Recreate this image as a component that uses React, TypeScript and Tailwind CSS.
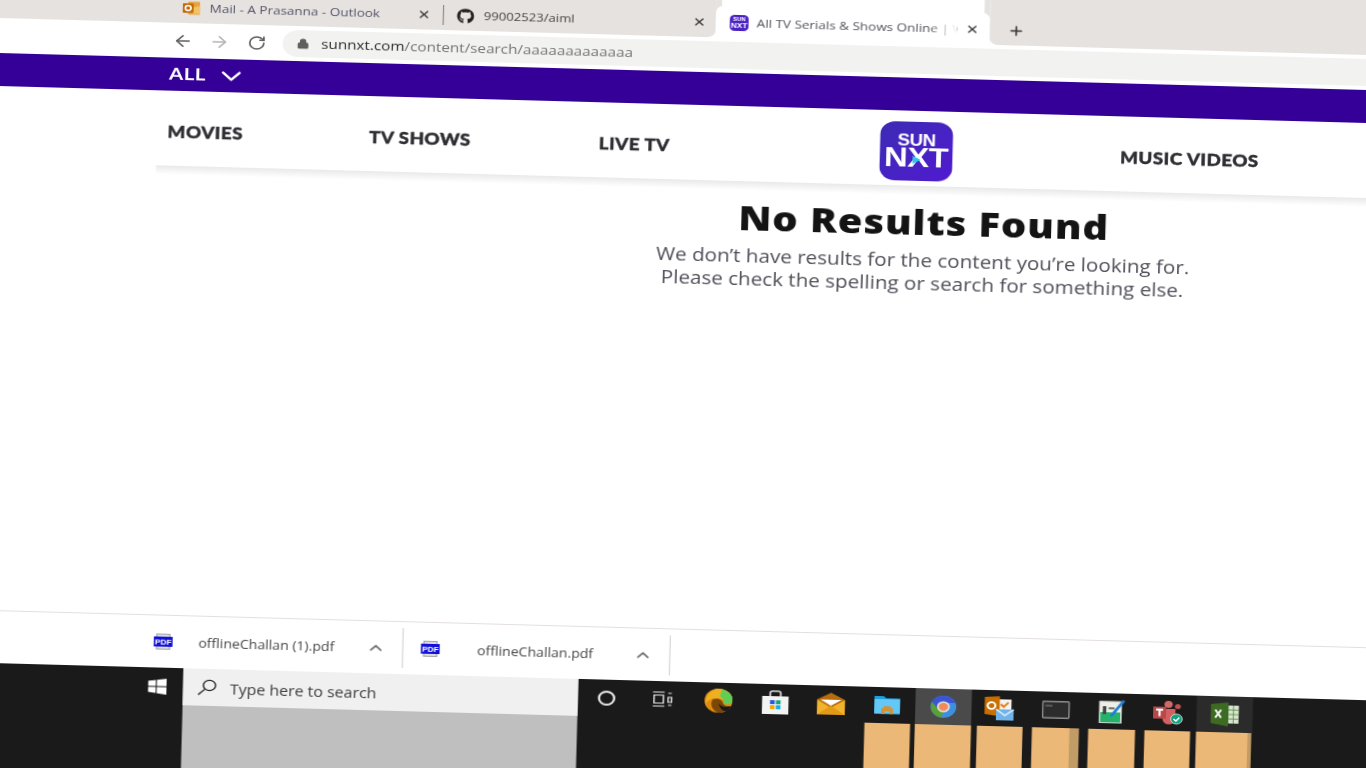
import { ArrowLeft, ArrowRight, ChevronDown, ChevronUp, Lock, Plus, RotateCw, X } from "lucide-react";
import { FaGithub } from "react-icons/fa";

const sans = "font-['Open_Sans',sans-serif]";

/* ── Small app icons ── */

const OutlookMini = () => (
  <svg width="15" height="16" viewBox="0 0 16 16">
    <rect x="5" y="1" width="11" height="14" rx="1" fill="#e8a33a" />
    <path d="M8 8l8-3v9H8z" fill="#f2c267" />
    <rect x="0" y="3" width="10" height="10" rx="1" fill="#c46a08" />
    <circle cx="5" cy="8" r="2.6" fill="none" stroke="#fff" strokeWidth="1.5" />
  </svg>
);

const SunMini = () => (
  <div className="flex h-[16px] w-[16px] flex-col items-center justify-center rounded-[4px] bg-[#4a22c4] font-['Liberation_Sans',sans-serif] font-bold leading-none text-white">
    <span className="text-[5px]">SUN</span>
    <span className="text-[7px]">NXT</span>
  </div>
);

const PdfIcon = () => (
  <div className="relative flex h-[16px] w-[16px] shrink-0 items-center">
    <div className="absolute inset-x-[2px] inset-y-0 border border-[#a4a4aa] bg-[#dcdce0]" />
    <div className="relative flex h-[10px] w-full items-center justify-center bg-[#1010d8] font-['Liberation_Sans',sans-serif] text-[7px] font-bold leading-none text-white">
      PDF
    </div>
  </div>
);

const WindowsLogo = () => (
  <svg width="16" height="16" viewBox="0 0 16 16" fill="#fff">
    <path d="M0 2.4 6.7 1.4v6.2H0zM7.6 1.3 16 0v7.6H7.6zM0 8.4h6.7v6.2L0 13.6zM7.6 8.4H16V16l-8.4-1.3z" />
  </svg>
);

const SearchGlass = () => (
  <svg width="17" height="17" viewBox="0 0 17 17" fill="none" stroke="#222" strokeWidth="1.2">
    <circle cx="10.5" cy="6.5" r="5.2" />
    <path d="M6.7 10.3 1 16" />
  </svg>
);

const TaskView = () => (
  <svg width="18" height="16" viewBox="0 0 18 16" fill="none" stroke="#e6e6e6" strokeWidth="1.2">
    <path d="M1 1h10M1 15h10M2 4h8v8H2z" />
    <path d="M14 2h3M14 6h3v5h-3zM14 14h3" />
  </svg>
);

const EdgeIcon = () => (
  <svg width="24" height="24" viewBox="0 0 24 24">
    <circle cx="12" cy="12" r="12" fill="#e08a10" />
    <path d="M12 0c6.600 0 12 5 12 11 0 1.500-.5 2.500-1.500 3.200C19 12 13 8.500 7 10 4 11 2.500 13 1 16 0 8 5 0 12 0z" fill="#eeb020" />
    <path d="M15 .6c5 1.400 9 5.400 9 10.400 0 2.600-1.500 4-4 4.500-1.500.3-3 0-4-.7 1-2.800-.4-5.500-3-7z" fill="#62cc55" />
    <path d="M7 11c4-2 8-.5 9 3.500.5 2 3 3 6 2.500-2 4.500-6 7-10 7-5-2-7.500-8-5-13z" fill="#7c4608" />
    <path d="M12 14.500c2 3.500 6 4.500 11 2.500-1 2-2.500 4-4 5-4 1-6-4-7-7.500z" fill="#1a1a1a" />
  </svg>
);

const StoreIcon = () => (
  <svg width="23" height="24" viewBox="0 0 23 24">
    <path d="M7 7V3a2 2 0 0 1 2-2h5a2 2 0 0 1 2 2v4" fill="none" stroke="#ddd" strokeWidth="1.500" />
    <rect x="0" y="6" width="23" height="18" fill="#f3f3f3" />
    <rect x="7" y="10" width="4" height="4" fill="#2a55e0" />
    <rect x="12" y="10" width="4" height="4" fill="#10a878" />
    <rect x="7" y="15" width="4" height="4" fill="#f5a800" />
    <rect x="12" y="15" width="4" height="4" fill="#10b0f0" />
  </svg>
);

const MailIcon = () => (
  <svg width="24" height="22" viewBox="0 0 24 22">
    <path d="M0 7 12 0l12 7v15H0z" fill="#b96c0a" />
    <path d="M3 7h18l-9 6z" fill="#fff" />
    <path d="M0 7l12 8 12-8v15H0z" fill="#f2b32c" />
    <path d="M0 22l12-9 12 9z" fill="#e39a17" />
  </svg>
);

const FolderIcon = () => (
  <svg width="22" height="18" viewBox="0 0 22 18">
    <path d="M0 0h8l2 2h12v16H0z" fill="#1f9fe0" />
    <rect x="0" y="3" width="22" height="14" fill="#63c8f5" />
    <path d="M6 18v-6h2v-2h6v2h2v6h-3v-3H9v3z" fill="#d39138" />
  </svg>
);

const ChromeIcon = () => (
  <svg width="22" height="22" viewBox="0 0 22 22">
    <circle cx="11" cy="11" r="11" fill="#3d8fe0" />
    <path d="M11 0A11 11 0 0 0 1 6.500L6 13 8 7h13A11 11 0 0 0 11 0z" fill="#3a55d8" />
    <path d="M1 6.500A11 11 0 0 0 9 21.800l3-7-5-1z" fill="#5aa038" />
    <circle cx="11" cy="11" r="5.500" fill="#dfe3dc" />
    <circle cx="11" cy="11" r="4" fill="#f08a5a" />
  </svg>
);

const OutlookIcon = () => (
  <svg width="26" height="24" viewBox="0 0 26 24">
    <rect x="11" y="3" width="12" height="11" fill="#f3f3f3" />
    <path d="M14 8l2.500 2.500 4-4.500" fill="none" stroke="#d97b0c" strokeWidth="1.800" />
    <path d="M0 1 13 0v20L0 18z" fill="#c86f00" />
    <circle cx="6" cy="9.500" r="3.300" fill="none" stroke="#fff" strokeWidth="1.800" />
    <rect x="10" y="13" width="15" height="11" fill="#6fb3ea" />
    <path d="M10 13l7.500 6 7.500-6" fill="none" stroke="#dfeefa" strokeWidth="1.500" />
  </svg>
);

const CmdIcon = () => (
  <svg width="24" height="18" viewBox="0 0 24 18">
    <rect x="0.700" y="0.700" width="22.600" height="16.600" rx="1" fill="#2c2c2c" stroke="#8c8c8c" strokeWidth="1.400" />
    <path d="M3 4h6v2H3z" fill="#5a5a5a" />
  </svg>
);

const PublisherIcon = () => (
  <svg width="24" height="24" viewBox="0 0 24 24">
    <rect x="1" y="2" width="19" height="22" fill="#eef0e8" stroke="#aaa" strokeWidth="0.800" />
    <rect x="2" y="13" width="17" height="10" fill="#25b36c" />
    <rect x="4" y="7" width="3" height="8" fill="#444" />
    <path d="M9 9h5" stroke="#444" strokeWidth="1.500" />
    <path d="M11 17 22 1" stroke="#1f7fd6" strokeWidth="2.400" />
  </svg>
);

const TeamsIcon = () => (
  <svg width="26" height="24" viewBox="0 0 26 24">
    <circle cx="13" cy="3.500" r="3.500" fill="#d36a6a" />
    <circle cx="21" cy="5.500" r="2.500" fill="#c65050" />
    <path d="M8 8h11v10a5 5 0 0 1-11 0z" fill="#d65f5f" />
    <rect x="0" y="6" width="11" height="12" fill="#b94848" />
    <path d="M2.500 9h6M5.500 9v6.500" stroke="#fff" strokeWidth="1.800" />
    <circle cx="20" cy="18" r="5" fill="#12a47c" stroke="#ddd" strokeWidth="0.800" />
    <path d="M17.500 18l2 2 3-3.500" stroke="#fff" strokeWidth="1.300" fill="none" />
  </svg>
);

const ExcelIcon = () => (
  <svg width="25" height="24" viewBox="0 0 25 24">
    <rect x="12" y="3" width="12" height="18" fill="#d9e6cf" />
    <path d="M15 3v18M19.500 3v18M12 7.500h12M12 12h12M12 16.500h12" stroke="#5c8a4a" strokeWidth="0.800" />
    <path d="M0 2 15 0v24L0 21z" fill="#3d6b22" />
    <path d="M4 7.500l5 8M9 7.500l-5 8" stroke="#f2f2f2" strokeWidth="1.800" />
  </svg>
);

const SunLogo = () => (
  <div className="relative flex h-[59px] w-[62px] flex-col items-center rounded-[13px] bg-gradient-to-br from-[#3c2ab4] to-[#5018d0] pt-[13px] font-['Liberation_Sans',sans-serif] font-bold tracking-normal text-white [-webkit-text-stroke:0px]">
    <span className="text-[16px] leading-[12px] tracking-[-0.5px]">SUN</span>
    <span className="text-[28px] leading-[22px] tracking-[-0.5px]">NXT</span>
    <div className="absolute left-[28px] top-[34px] h-0 w-0 border-y-[4px] border-l-[7px] border-y-transparent border-l-[#2fc6e8]" />
  </div>
);

/* ── Chrome parts ── */

const TabClose = () => <X className="h-[12px] w-[12px] text-[#3c3c3c]" strokeWidth={2.400} />;

const DownloadItem = ({ name, gap, width }: { name: string; gap: string; width: string }) => (
  <>
    <PdfIcon />
    <span className={`${gap} ${width} whitespace-nowrap pt-[2px] text-[12px] text-[#47474b]`}>{name}</span>
    <span className="flex w-[22px] justify-center">
      <ChevronUp className="h-[17px] w-[17px] text-[#6a6a6a]" strokeWidth={2} />
    </span>
    <span className="ml-[12px] h-[40px] w-px bg-[#d6d6d6]" />
  </>
);

const NavLink = ({ label, width }: { label: string; width: string }) => (
  <span className={`${width} pt-[2px]`}>{label}</span>
);

const taskCells = [
  { icon: <div className="h-[15px] w-[15px] rounded-full border-2 border-[#e6e6e6]" />, block: "" },
  { icon: <TaskView />, block: "" },
  { icon: <EdgeIcon />, block: "" },
  { icon: <StoreIcon />, block: "" },
  { icon: <MailIcon />, block: "" },
  { icon: <FolderIcon />, block: "ml-[5px] mr-[4px]" },
  { icon: <ChromeIcon />, block: "", cell: "bg-[#4a4a4a]" },
  { icon: <OutlookIcon />, block: "ml-[5px] mr-[4px]" },
  { icon: <CmdIcon />, block: "ml-[4px] mr-[4px] border-r-[8px] border-[#c29c66]" },
  { icon: <PublisherIcon />, block: "ml-[4px] mr-[4px]" },
  { icon: <TeamsIcon />, block: "ml-[4px] mr-[5px]" },
  { icon: <ExcelIcon />, block: "mr-[1px] border-r-[3px] border-[#c29c66]", cell: "bg-[#2b2b2b]" },
];

export default function App() {
  return (
    <div className="h-[768px] w-[1366px] overflow-hidden bg-white">
      <div className={`-mt-[40px] flex h-[860px] w-[1190px] origin-[0px_40px] rotate-[1.55deg] scale-x-[1.172] flex-col blur-[0.35px] ${sans}`}>
        {/* Tab strip */}
        <div className="flex h-[58px] shrink-0 bg-white">
          <div className="flex h-full w-[611px] items-center rounded-br-[7px] bg-[#e6e2df] pt-[28px]">
            <span className="ml-[156px] flex w-[23px]">
              <OutlookMini />
            </span>
            <span className="w-[177px] whitespace-nowrap text-[11.500px] text-[#55556a]">Mail - A Prasanna - Outlook</span>
            <TabClose />
            <span className="ml-[10px] h-[20px] w-px bg-[#8a8a8a]" />
            <span className="ml-[11px] flex w-[23px]">
              <FaGithub className="h-[15px] w-[15px] text-[#222]" />
            </span>
            <span className="w-[178px] whitespace-nowrap text-[11.200px] text-[#454545]">99002523/aiml</span>
            <TabClose />
          </div>
          <div className="flex h-full w-[234px] flex-col bg-[#e6e2df]">
            <div className="mx-[5px] h-[26px] bg-white" />
            <div className="flex h-[32px] items-center rounded-t-[7px] bg-white pl-[12px] pt-[2px]">
              <span className="flex w-[23px]">
                <SunMini />
              </span>
              <span className="relative w-[171px] overflow-hidden whitespace-nowrap text-[11.500px] text-[#55555d]">
                All TV Serials &amp; Shows Online | Watch
                <span className="absolute inset-y-0 right-0 w-[24px] bg-gradient-to-r from-transparent to-white" />
              </span>
              <span className="ml-[7px] flex">
                <TabClose />
              </span>
            </div>
          </div>
          <div className="flex h-full flex-1 items-center rounded-bl-[7px] bg-[#e6e2df] pt-[28px]">
            <Plus className="ml-[15px] h-[15px] w-[15px] text-[#333]" strokeWidth={2.200} />
          </div>
        </div>

        {/* Toolbar */}
        <div className="flex h-[35px] shrink-0 items-center bg-white">
          <ArrowLeft className="ml-[148px] h-[18px] w-[18px] text-[#5f5f5f]" strokeWidth={2} />
          <ArrowRight className="ml-[13px] h-[18px] w-[18px] text-[#b5b5b5]" strokeWidth={2} />
          <RotateCw className="ml-[15px] h-[16px] w-[16px] text-[#5f5f5f]" strokeWidth={2.200} />
          <div className="ml-[14px] flex h-[27px] flex-1 items-center rounded-l-[14px] bg-[#f2f2f0] pl-[12px]">
            <Lock className="h-[11px] w-[11px] fill-[#5f5f5f] text-[#5f5f5f]" strokeWidth={2} />
            <span className="ml-[10px] whitespace-nowrap text-[13px] text-[#737373]">
              <span className="text-[#2e2e2e]">sunnxt.com</span>/content/search/aaaaaaaaaaaaa
            </span>
          </div>
        </div>

        {/* Purple bar */}
        <div className="flex h-[33px] shrink-0 items-center bg-[#340098] pl-[146px] font-['Lato',sans-serif] text-white">
          <span className="text-[17.500px] font-bold tracking-[0.3px]">ALL</span>
          <ChevronDown className="ml-[8px] h-[28px] w-[28px]" strokeWidth={2} />
        </div>

        {/* Site nav */}
        <nav className="ml-[137px] flex h-[75px] shrink-0 items-center bg-white pl-[9px] pt-[5px] font-['Lato',sans-serif] text-[16px] font-black tracking-[0.4px] text-[#2e2e33] [-webkit-text-stroke:0.4px_#2e2e33]">
          <NavLink label="MOVIES" width="w-[172px]" />
          <NavLink label="TV SHOWS" width="w-[196px]" />
          <NavLink label="LIVE TV" width="w-[240px]" />
          <SunLogo />
          <span className="ml-[143px] pt-[2px]">MUSIC VIDEOS</span>
        </nav>

        {/* Empty search result */}
        <main className="flex-1 bg-white">
          <div className="ml-[137px] h-[9px] bg-gradient-to-b from-[#e9e9e9] to-white" />
          <div className="ml-[553px] mt-[7px] w-[480px] text-center">
            <h1 className="text-[34px] font-extrabold leading-[40px] tracking-[0.8px] text-[#141414]">No Results Found</h1>
            <p className="mt-[7px] text-[17.600px] leading-[23px] text-[#50505a]">
              We don’t have results for the content you’re looking for.
              <br />
              Please check the spelling or search for something else.
            </p>
          </div>
        </main>

        {/* Downloads shelf */}
        <div className="flex h-[53px] shrink-0 items-center border-t border-[#e4dfdf] bg-white pl-[146px]">
          <DownloadItem name="offlineChallan (1).pdf" gap="ml-[22px]" width="w-[140px]" />
          <span className="w-[15px]" />
          <DownloadItem name="offlineChallan.pdf" gap="ml-[32px]" width="w-[130px]" />
        </div>

        {/* Windows taskbar */}
        <div className="flex h-[157px] shrink-0 bg-[#1a1a1a]">
          <div className="flex h-[37px] w-[172px] items-center justify-end pr-[14px]">
            <WindowsLogo />
          </div>
          <div className="w-[337px] bg-[#bfbfbf]">
            <div className="flex h-[37px] items-center bg-[#f0f0f0] pl-[12px]">
              <SearchGlass />
              <span className="ml-[11px] pt-[4px] text-[13.600px] text-[#3c3c3c]">Type here to search</span>
            </div>
          </div>
          {taskCells.map((c, i) => (
            <div key={i} className="flex w-[48px] flex-col">
              <div className={`flex h-[36px] items-center justify-center ${c.cell ?? ""}`}>{c.icon}</div>
              {c.block !== "" || c.cell ? <div className={`flex-1 bg-[#ebb877] ${c.block}`} /> : null}
            </div>
          ))}
        </div>
      </div>
    </div>
  );
}
